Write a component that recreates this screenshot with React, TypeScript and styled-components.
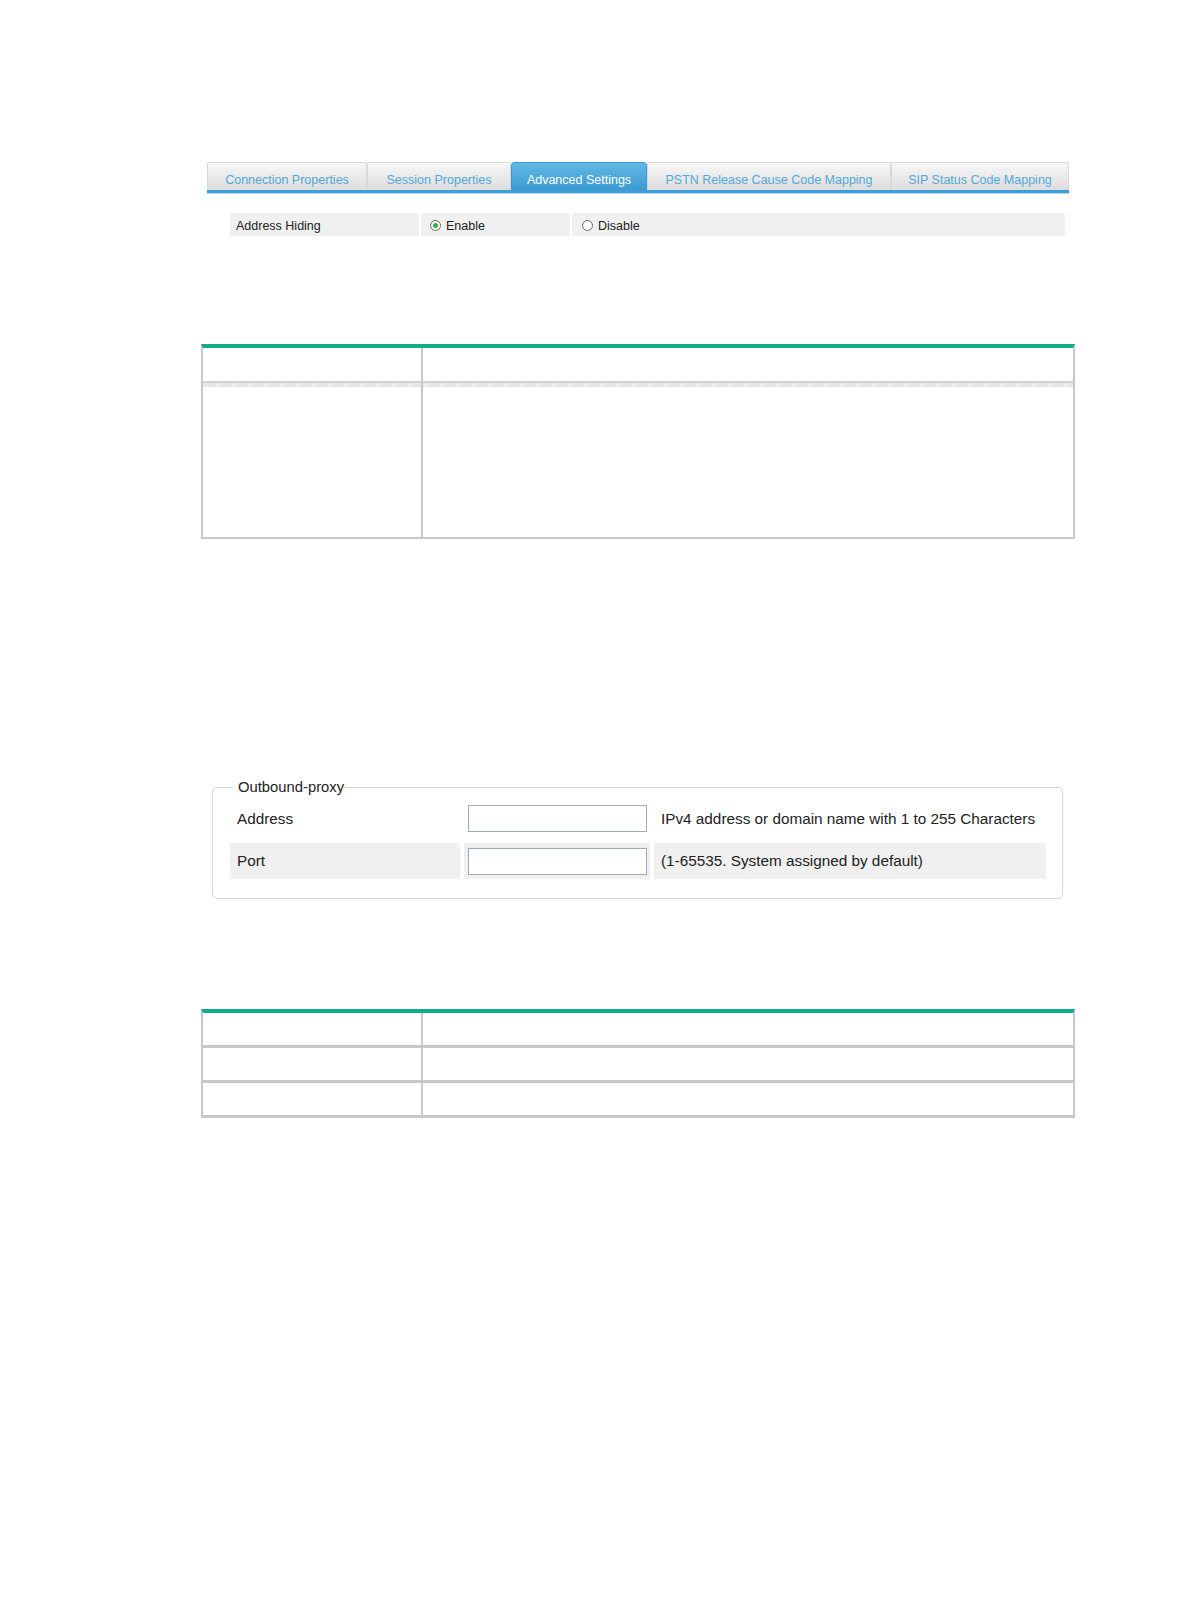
import React from "react";
import styled, { createGlobalStyle } from "styled-components";

const GlobalStyle = createGlobalStyle`
  html, body {
    margin: 0;
    padding: 0;
    background: #ffffff;
  }
  body {
    font-family: "Liberation Sans", Arial, sans-serif;
    color: #222;
  }
`;

const Page = styled.div`
  width: 1190px;
  min-height: 1616px;
  padding-top: 162px;
  box-sizing: border-box;
  overflow: hidden;
`;

// 탭 영역
const TabBar = styled.div`
  display: flex;
  margin-left: 207px;
  width: 862px;
  height: 28px;
  border-bottom: 3px solid #3d9fd6;
  box-shadow: 0 1px 0 #b5dcf1;
`;

const Tab = styled.div<{ $w: number; $active?: boolean }>`
  width: ${(p) => p.$w}px;
  flex: none;
  box-sizing: border-box;
  display: flex;
  align-items: center;
  justify-content: center;
  padding-top: 6px;
  font-size: 12.5px;
  border: 1px solid ${(p) => (p.$active ? "#3a98d0" : "#d8d8d8")};
  border-bottom: none;
  border-radius: ${(p) => (p.$active ? "4px 4px 0 0" : "2px 2px 0 0")};
  color: ${(p) => (p.$active ? "#ffffff" : "#52a8da")};
  background: ${(p) =>
    p.$active
      ? "linear-gradient(to bottom, #62b8e4, #3c9ad2)"
      : "linear-gradient(to bottom, #f7f7f7, #dddddd)"};
`;

const SettingRow = styled.div`
  display: grid;
  grid-template-columns: 189px 149px 1fr;
  column-gap: 2px;
  margin: 20px 0 0 230px;
  width: 835px;
  height: 23px;
  font-size: 12.5px;
`;

const SettingCell = styled.div<{ $pad?: number }>`
  background: #f0f0f0;
  display: flex;
  align-items: center;
  padding-left: ${(p) => p.$pad ?? 6}px;
  padding-top: 2px;
  box-sizing: border-box;
`;

const Radio = styled.span<{ $checked?: boolean }>`
  display: inline-block;
  flex: none;
  width: 9px;
  height: 9px;
  border: 1px solid #666;
  border-radius: 50%;
  background: #fff;
  margin-right: 5px;
  position: relative;
  &::after {
    content: "";
    display: ${(p) => (p.$checked ? "block" : "none")};
    position: absolute;
    left: 2px;
    top: 2px;
    width: 5px;
    height: 5px;
    border-radius: 50%;
    background: #3aad45;
  }
`;

// 표
const Table = styled.div<{ $top: number }>`
  margin: ${(p) => p.$top}px 0 0 201px;
  width: 874px;
  border-top: 4px solid #0fae8a;
  border-left: 2px solid #c8c8c8;
  border-right: 2px solid #c8c8c8;
  box-sizing: border-box;
`;

const TableRow = styled.div<{ $h: number; $line?: number; $dashed?: boolean; $soft?: boolean }>`
  display: grid;
  grid-template-columns: 218px 1fr;
  height: ${(p) => p.$h}px;
  border-bottom: ${(p) => p.$line ?? 2}px solid ${(p) => (p.$soft ? "#d4d4d4" : "#c8c8c8")};
  background: ${(p) =>
    p.$dashed
      ? "repeating-linear-gradient(90deg, #e6e6e6 0 14px, #f3f3f3 14px 16px) top left / 100% 4px no-repeat"
      : "none"};
`;

const TableCell = styled.div`
  & + & {
    border-left: 2px solid #c8c8c8;
  }
`;

// 필드셋
const ProxyBox = styled.fieldset`
  margin: 240px 0 0 212px;
  width: 851px;
  box-sizing: border-box;
  border: 1px solid #d6d6d6;
  border-radius: 5px;
  padding: 0 16px 19px 17px;
  font-size: 15.3px;
  min-width: 0;
`;

const Legend = styled.legend`
  margin-left: 3px;
  padding: 0 0 0 5px;
  font-size: 14.8px;
  color: #222;
`;

const ProxyRow = styled.div<{ $shaded?: boolean; $h: number; $gap: number }>`
  display: grid;
  grid-template-columns: 230px 186px 1fr;
  column-gap: 4px;
  height: ${(p) => p.$h}px;
  margin-top: ${(p) => p.$gap}px;
  & > div {
    background: ${(p) => (p.$shaded ? "#f0f0f0" : "transparent")};
  }
`;

const ProxyCell = styled.div<{ $pad?: number }>`
  display: flex;
  align-items: center;
  padding-left: ${(p) => p.$pad ?? 7}px;
  white-space: nowrap;
`;

const TextInput = styled.input`
  width: 179px;
  height: 27px;
  box-sizing: border-box;
  border: 1px solid #9ea8bf;
  background: #fff;
  outline: none;
  font-family: inherit;
`;

const tabs = [
  { label: "Connection Properties", w: 160 },
  { label: "Session Properties", w: 144 },
  { label: "Advanced Settings", w: 136, active: true },
  { label: "PSTN Release Cause Code Mapping", w: 244 },
  { label: "SIP Status Code Mapping", w: 178 },
];

const App: React.FC = () => {
  return (
    <Page>
      <GlobalStyle />
      <TabBar>
        {tabs.map((t) => (
          <Tab key={t.label} $w={t.w} $active={t.active}>
            {t.label}
          </Tab>
        ))}
      </TabBar>

      <SettingRow>
        <SettingCell>Address Hiding</SettingCell>
        <SettingCell $pad={9}>
          <Radio $checked />
          Enable
        </SettingCell>
        <SettingCell $pad={10}>
          <Radio />
          Disable
        </SettingCell>
      </SettingRow>

      <Table $top={108}>
        <TableRow $h={33} $soft>
          <TableCell />
          <TableCell />
        </TableRow>
        <TableRow $h={154} $dashed>
          <TableCell />
          <TableCell />
        </TableRow>
      </Table>

      <ProxyBox>
        <Legend>Outbound-proxy</Legend>
        <ProxyRow $h={31} $gap={8}>
          <ProxyCell>Address</ProxyCell>
          <ProxyCell $pad={4}>
            <TextInput />
          </ProxyCell>
          <ProxyCell>IPv4 address or domain name with 1 to 255 Characters</ProxyCell>
        </ProxyRow>
        <ProxyRow $h={36} $gap={9} $shaded>
          <ProxyCell>Port</ProxyCell>
          <ProxyCell $pad={4}>
            <TextInput />
          </ProxyCell>
          <ProxyCell>(1-65535. System assigned by default)</ProxyCell>
        </ProxyRow>
      </ProxyBox>

      <Table $top={110}>
        <TableRow $h={32} $line={3}>
          <TableCell />
          <TableCell />
        </TableRow>
        <TableRow $h={32} $line={3}>
          <TableCell />
          <TableCell />
        </TableRow>
        <TableRow $h={32} $line={3}>
          <TableCell />
          <TableCell />
        </TableRow>
      </Table>
    </Page>
  );
};

export default App;
